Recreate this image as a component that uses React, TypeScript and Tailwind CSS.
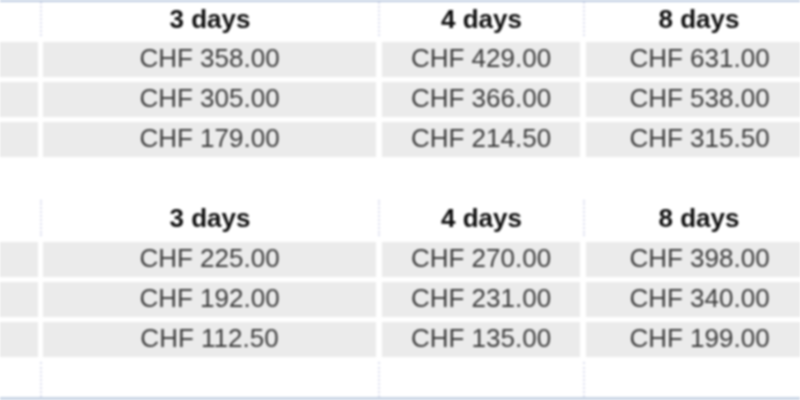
import React from 'react';

type PriceTable = {
  headers: string[];
  rows: string[][];
  topBorder?: boolean;
  trailingRow?: boolean;
};

const tables: PriceTable[] = [
  {
    headers: ['3 days', '4 days', '8 days'],
    rows: [
      ['CHF 358.00', 'CHF 429.00', 'CHF 631.00'],
      ['CHF 305.00', 'CHF 366.00', 'CHF 538.00'],
      ['CHF 179.00', 'CHF 214.50', 'CHF 315.50'],
    ],
    topBorder: true,
  },
  {
    headers: ['3 days', '4 days', '8 days'],
    rows: [
      ['CHF 225.00', 'CHF 270.00', 'CHF 398.00'],
      ['CHF 192.00', 'CHF 231.00', 'CHF 340.00'],
      ['CHF 112.50', 'CHF 135.00', 'CHF 199.00'],
    ],
    trailingRow: true,
  },
];

// column widths and the inner padding that leaves the white gaps between grey cells
const cols = [
  { w: 'w-[40px]', pad: 'pl-0 pr-[2px]' },
  { w: 'w-[338px]', pad: 'pl-[3px] pr-[2px]' },
  { w: 'w-[205px]', pad: 'pl-[4px] pr-[3px]' },
  { w: 'w-[230px]', pad: 'pl-[3px] pr-0' },
];

const sep = 'border-l-2 border-dotted border-[#dde0f0]';

const HeaderRow: React.FC<{ headers: string[]; height: string }> = ({ headers, height }) => (
  <div className={`flex ${height}`}>
    {cols.map((c, i) => (
      <div key={i} className={`${c.w} shrink-0 pb-[4px]`}>
        <div
          className={`h-full flex items-center justify-center ${i > 0 ? sep : ''} text-[26px] font-bold text-[#111]`}
        >
          {i > 0 ? headers[i - 1] : ''}
        </div>
      </div>
    ))}
  </div>
);

const PriceRow: React.FC<{ cells: string[] }> = ({ cells }) => (
  <div className="flex h-[40px]">
    {cols.map((c, i) => (
      <div key={i} className={`${c.w} shrink-0 pt-[2px] pb-[3px] ${c.pad}`}>
        <div className="h-full bg-[#ebebeb] flex items-center justify-center text-[26px] text-[#3c3c3c] leading-none pb-[3px]">
          {i > 0 ? cells[i - 1] : ''}
        </div>
      </div>
    ))}
  </div>
);

const App: React.FC = () => {
  return (
    <div
      className="w-[800px] h-[400px] overflow-hidden bg-white blur-[0.9px]"
      style={{ fontFamily: '"Liberation Sans", Arial, sans-serif' }}
    >
      {tables.map((t, ti) => (
        <div key={ti} className={ti > 0 ? 'mt-[40px]' : ''}>
          {t.topBorder && <div className="h-[2px] bg-[#bccbe0]" />}
          <HeaderRow headers={t.headers} height={t.topBorder ? 'h-[38px]' : 'h-[40px]'} />
          {t.rows.map((r, ri) => (
            <PriceRow key={ri} cells={r} />
          ))}
          {t.trailingRow && (
            <>
              <div className="flex h-[37px]">
                {cols.map((c, i) => (
                  <div key={i} className={`${c.w} shrink-0 pt-[2px]`}>
                    <div className={`h-full ${i > 0 ? sep : ''}`} />
                  </div>
                ))}
              </div>
              <div className="h-[3px] bg-[#c9d5e5]" />
            </>
          )}
        </div>
      ))}
    </div>
  );
};

export default App;
